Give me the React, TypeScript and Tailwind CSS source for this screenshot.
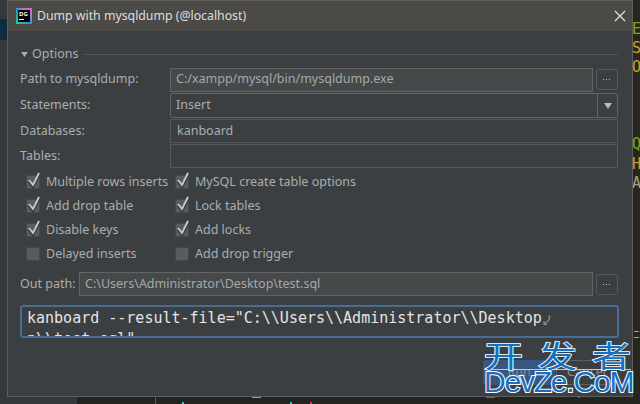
const leftChecks = [
  { label: 'Multiple rows inserts', checked: true },
  { label: 'Add drop table', checked: true },
  { label: 'Disable keys', checked: true },
  { label: 'Delayed inserts', checked: false },
]

const rightChecks = [
  { label: 'MySQL create table options', checked: true },
  { label: 'Lock tables', checked: true },
  { label: 'Add locks', checked: true },
  { label: 'Add drop trigger', checked: false },
]

function Check({ label, checked }: { label: string; checked: boolean }) {
  return (
    <div className="flex h-6 items-center">
      <div className="relative h-[14px] w-[14px] rounded-[2px] border border-[#46484a] bg-[#595b5d]">
        {checked && (
          <svg viewBox="0 0 16 18" className="absolute -top-[5px] -left-px h-[18px] w-[16px]">
            <path d="M3 10 L7 15 L13 3" fill="none" stroke="#2f3133" strokeWidth="3" />
            <path d="M3 9 L7 14 L13 2" fill="none" stroke="#c6c8ca" strokeWidth="2" />
          </svg>
        )}
      </div>
      <span className="ml-[6px] whitespace-nowrap">{label}</span>
    </div>
  )
}

function Dots() {
  return (
    <div className="ml-[3px] flex h-[21px] w-[22px] shrink-0 items-center justify-center rounded-[3px] border border-[#565a5c] text-[#bbbbbb]">
      <svg viewBox="0 0 8 1" className="h-[1px] w-[8px]">
        <rect x="0" width="1" height="1" fill="currentColor" />
        <rect x="3" width="1" height="1" fill="currentColor" />
        <rect x="6" width="1" height="1" fill="currentColor" />
      </svg>
    </div>
  )
}

export default function App() {
  return (
    <div className="relative h-[404px] w-[640px] overflow-hidden bg-[#36393b] font-['Noto_Sans','Open_Sans',sans-serif] text-[12.5px] leading-none text-[#a9adb0]">
      {/* things behind the dialog */}
      <div className="absolute left-0 top-[19px] h-[21px] w-[7px] bg-[#0d2c42]" />
      <div className="absolute left-[77px] top-[396px] h-[8px] w-[563px] bg-[#24241e]" />
      <div className="absolute left-[155px] top-[396px] h-[8px] w-px bg-[#5a5a58]" />
      <div className="absolute right-0 top-0 h-full w-[7px] bg-[#26261f]" />
      <div className="absolute left-[182px] top-[402px] h-[2px] w-[2px] bg-[#4fb3c4]" />
      <div className="absolute left-[252px] top-[397px] h-px w-[9px] bg-[#5fb8c4]" />
      <div className="absolute left-[290px] top-[402px] h-[2px] w-[2px] bg-[#4fb3c4]" />
      <div className="absolute left-[310px] top-[402px] h-[2px] w-[2px] bg-[#d6336c]" />
      <div className="absolute left-[486px] top-[397px] h-px w-[9px] bg-[#d6336c]" />
      <div className="absolute left-[578px] top-[397px] h-px w-[2px] bg-[#d6336c]" />
      <div className="absolute left-[634px] top-[331px] h-[7px] w-[5px] border-y border-[#c9a227]" />
      <div className="absolute left-[632px] top-[20px] font-['DejaVu_Sans_Mono',monospace] text-[15px] leading-[19px]">
        <div className="text-[#7fa61f]">E</div>
        <div className="text-[#c9a227]">S</div>
        <div className="text-[#c9a227]">O</div>
        <div className="mt-[58px] text-[#7fa61f]">Q</div>
        <div className="mt-px text-[#c9a227]">H</div>
        <div className="text-[#a9a27a]">A</div>
      </div>

      {/* dialog */}
      <div className="absolute left-[7px] top-0 flex h-[397px] w-[626px] flex-col border border-[#5b5d5e] border-t-[#5f5e5b] bg-[#3c3f41]">
        <div className="flex h-[30px] shrink-0 items-center bg-[#4b4a47] pl-[8px] pr-[6px] text-[#dedede]">
          <div className="flex h-[16px] w-[16px] shrink-0 items-center justify-center bg-gradient-to-tr from-[#21d789] via-[#2b8fd6] to-[#ff45c0]">
            <div className="h-[12px] w-[12px] bg-black pl-[1px] pt-[1px] text-[6px] font-bold leading-[6px] text-white">
              DG
              <div className="mt-[2px] h-px w-[5px] bg-white" />
            </div>
          </div>
          <span className="ml-[5px] text-[12.3px]">Dump with mysqldump (@localhost)</span>
          <svg viewBox="0 0 12 12" className="ml-auto h-[12px] w-[12px]">
            <path d="M1 1 L11 11 M11 1 L1 11" stroke="#e4e4e4" strokeWidth="1.2" />
          </svg>
        </div>

        <div className="flex min-h-0 flex-col pl-[12px] pr-[14px]">
          <div className="mt-[16px] flex h-[14px] items-center">
            <svg viewBox="0 0 8 6" className="ml-[1px] h-[5px] w-[7px]">
              <path d="M0 0 H8 L4 6 Z" fill="#a9adb0" />
            </svg>
            <span className="ml-[4px]">Options</span>
            <div className="ml-[6px] h-px flex-1 bg-[#515456]" />
          </div>

          <div className="mt-[6px] flex h-[25px] items-center">
            <span className="w-[150px] shrink-0">Path to mysqldump:</span>
            <div className="flex h-[24px] w-[425px] items-center border border-[#646464] bg-[#45494a] pl-[5px] text-[#a4a8aa]">C:/xampp/mysql/bin/mysqldump.exe</div>
            <Dots />
          </div>
          <div className="mt-[1px] flex h-[25px] items-center">
            <span className="w-[150px] shrink-0">Statements:</span>
            <div className="flex h-[25px] w-[449px] items-center rounded-[3px] border border-[#646464] pl-[5px]">
              <span className="flex-1">Insert</span>
              <div className="flex h-full w-[20px] items-center justify-center border-l border-[#646464]">
                <svg viewBox="0 0 8 6" className="h-[6px] w-[8px]">
                  <path d="M0 0 H8 L4 6 Z" fill="#b9b9b9" />
                </svg>
              </div>
            </div>
          </div>
          <div className="mt-[1px] flex h-[24px] items-center">
            <span className="w-[150px] shrink-0">Databases:</span>
            <div className="flex h-[24px] w-[448px] items-center border border-[#565656] pl-[6px]">kanboard</div>
          </div>
          <div className="mt-px flex h-[24px] items-center">
            <span className="w-[150px] shrink-0">Tables:</span>
            <div className="h-[24px] w-[448px] border border-[#565656]" />
          </div>

          <div className="ml-[6px] mt-[2px] flex">
            <div className="w-[149px]">
              {leftChecks.map((c) => (
                <Check key={c.label} label={c.label} checked={c.checked} />
              ))}
            </div>
            <div>
              {rightChecks.map((c) => (
                <Check key={c.label} label={c.label} checked={c.checked} />
              ))}
            </div>
          </div>

          <div className="mt-[6px] flex h-[24px] items-center">
            <span className="w-[59px] shrink-0">Out path:</span>
            <div className="flex h-[24px] w-[516px] items-center border border-[#646464] bg-[#45494a] pl-[5px] text-[#a4a8aa]">C:\Users\Administrator\Desktop\test.sql</div>
            <Dots />
          </div>

          <div className="mt-[9px] h-[33px] w-[599px] overflow-hidden rounded-[3px] border-2 border-[#466d94] pl-[5px] pt-px font-['DejaVu_Sans_Mono',monospace] text-[15px] leading-[21px] text-[#e4e4e4]">
            <div className="flex items-center whitespace-nowrap">
              kanboard --result-file="C:\\Users\\Administrator\\Desktop
              <svg viewBox="0 0 8 10" className="ml-px mt-[2px] h-[10px] w-[8px]">
                <path d="M6.5 1 C7.5 4 5 6 1.5 9 M1 6 V9.5 H4" fill="none" stroke="#8a8a8a" strokeWidth="1.2" />
                <path d="M5 1 H7" stroke="#a07a4a" strokeWidth="1" />
              </svg>
            </div>
            <div className="whitespace-nowrap">p\\test.sql"</div>
          </div>
        </div>

        {/* dialog buttons, mostly hidden under the watermark */}
        <div className="absolute bottom-[11px] right-[15px] flex gap-[1px] text-[#8b8e90]">
          <div className="flex h-[25px] w-[72px] items-center justify-center rounded-[3px] bg-[#365880]">Run</div>
          <div className="flex h-[25px] w-[61px] items-center justify-center rounded-[3px] border border-[#5e6060]">Cancel</div>
        </div>
      </div>

      {/* watermark */}
      <div className="absolute left-[484px] top-[334px] flex w-[147px] flex-col text-[#1470c4] [-webkit-text-stroke:2px_white] [paint-order:stroke_fill]">
        <div className="mb-[3px] flex h-[32px] origin-bottom scale-y-[0.75] justify-between font-['Noto_Sans_CJK_SC',sans-serif] text-[39px] leading-[32px]">
          <span>开</span>
          <span>发</span>
          <span>者</span>
        </div>
        <div className="h-px w-full bg-[#9fd4e8] [-webkit-text-stroke:0]" />
        <div className="-mt-px whitespace-nowrap font-['Liberation_Sans',sans-serif] text-[30px] leading-[26px] tracking-[-1.2px]">DevZe.CoM</div>
      </div>
    </div>
  )
}
